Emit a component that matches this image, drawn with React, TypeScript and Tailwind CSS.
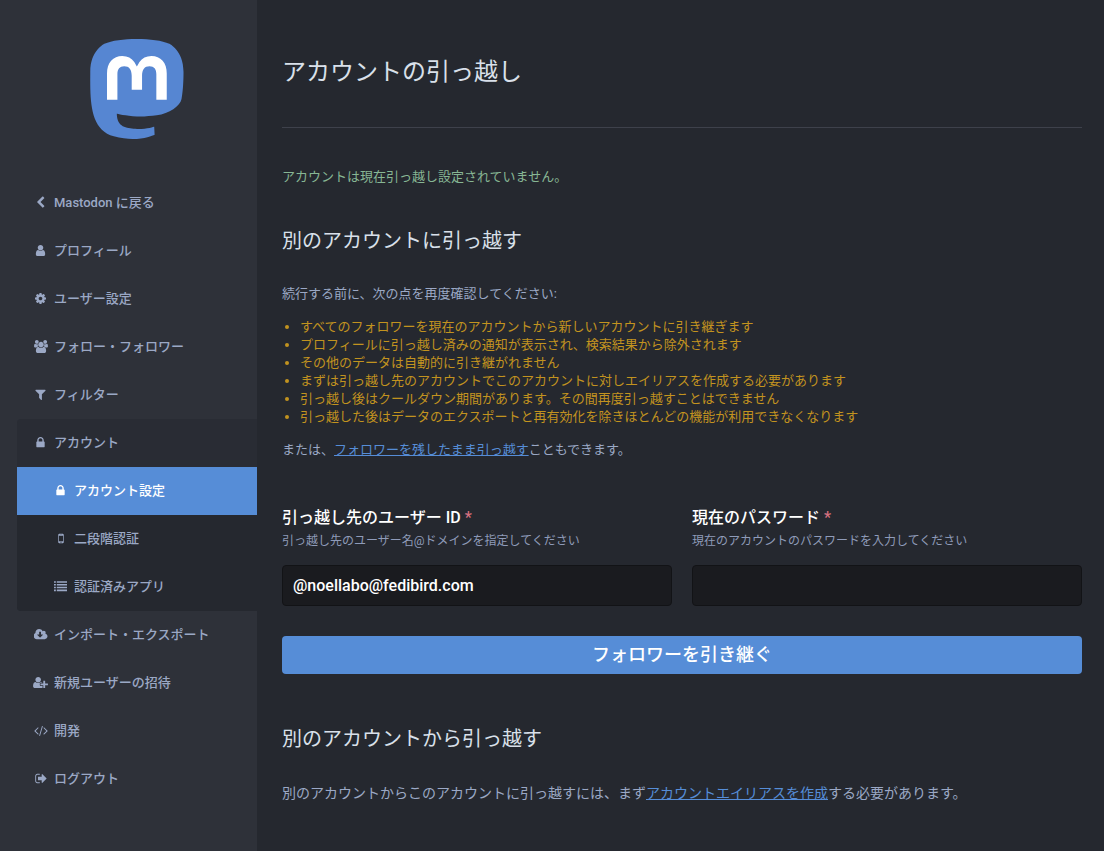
import { useState } from "react";
import type { ReactNode } from "react";

type IconName =
  | "back"
  | "user"
  | "cog"
  | "users"
  | "filter"
  | "lock"
  | "mobile"
  | "list"
  | "cloud"
  | "userPlus"
  | "code"
  | "signOut";

const icons: Record<IconName, { box: string; size: string; d: string }> = {
  back: {
    box: "256 0 1280 1792",
    size: "w-[9px]",
    d: "M1427 301l-531 531 531 531q19 19 19 45t-19 45l-166 166q-19 19-45 19t-45-19l-742-742q-19-19-19-45t19-45l742-742q19-19 45-19t45 19l166 166q19 19 19 45t-19 45z",
  },
  user: {
    box: "192 0 1408 1792",
    size: "w-[11px]",
    d: "M1536 1399q0 109-62.5 187t-150.5 78h-854q-88 0-150.5-78t-62.5-187q0-85 8.5-160.5t31.5-152 58.5-131 94-89 134.5-34.5q131 128 313 128t313-128q76 0 134.5 34.5t94 89 58.5 131 31.5 152 8.5 160.5zm-256-887q0 159-112.5 271.5t-271.5 112.5-271.5-112.5-112.5-271.5 112.5-271.5 271.5-112.5 271.5 112.5 112.5 271.5z",
  },
  cog: {
    box: "128 0 1536 1792",
    size: "w-[11px]",
    d: "M1152 896q0-106-75-181t-181-75-181 75-75 181 75 181 181 75 181-75 75-181zm512-109v222q0 12-8 23t-20 13l-185 28q-19 54-39 91 35 50 107 138 10 12 10 25t-9 23q-27 37-99 108t-94 71q-12 0-26-9l-138-108q-44 23-91 38-16 136-29 186-7 28-36 28h-222q-14 0-24.5-8.5t-11.5-21.5l-28-184q-49-16-90-37l-141 107q-10 9-25 9-14 0-25-11-126-114-165-168-7-10-7-23 0-12 8-23 15-21 51-66.5t54-70.5q-27-50-41-99l-183-27q-13-2-21-12.5t-8-23.5v-222q0-12 8-23t19-13l186-28q14-46 39-92-40-57-107-138-10-12-10-24 0-10 9-23 26-36 98.5-107.5t94.5-71.5q13 0 26 10l138 107q44-23 91-38 16-136 29-186 7-28 36-28h222q14 0 24.5 8.5t11.5 21.5l28 184q49 16 90 37l142-107q9-9 24-9 13 0 25 10 129 119 165 170 7 8 7 22 0 12-8 23-15 21-51 66.5t-54 70.5q26 50 41 98l183 28q13 2 21 12.5t8 23.5z",
  },
  users: {
    box: "0 0 1920 1792",
    size: "w-[14px]",
    d: "M593 896q-162 5-265 128h-134q-82 0-138-40.5t-56-118.5q0-353 124-353 6 0 43.5 21t97.5 42.5 119 21.5q67 0 133-23-5 37-5 66 0 139 81 256zm1071 637q0 120-73 189.5t-194 69.5h-874q-121 0-194-69.5t-73-189.5q0-53 3.5-103.5t14-109 26.5-108.5 43-97.5 62-81 85.5-53.5 111.5-20q10 0 43 21.5t73 48 107 48 135 21.5 135-21.5 107-48 73-48 43-21.5q61 0 111.5 20t85.5 53.5 62 81 43 97.5 26.5 108.5 14 109 3.5 103.5zm-1024-1277q0 106-75 181t-181 75-181-75-75-181 75-181 181-75 181 75 75 181zm704 384q0 159-112.5 271.5t-271.5 112.5-271.5-112.5-112.5-271.5 112.5-271.5 271.5-112.5 271.5 112.5 112.5 271.5zm576 225q0 78-56 118.5t-138 40.5h-134q-103-123-265-128 81-117 81-256 0-29-5-66 66 23 133 23 59 0 119-21.5t97.5-42.5 43.5-21q124 0 124 353zm-128-609q0 106-75 181t-181 75-181-75-75-181 75-181 181-75 181 75 75 181z",
  },
  filter: {
    box: "192 0 1408 1792",
    size: "w-[11px]",
    d: "M1595 295q17 41-14 70l-493 493v742q0 42-39 59-13 5-25 5-27 0-45-19l-256-256q-19-19-19-45v-486l-493-493q-31-29-14-70 17-39 59-39h1280q42 0 59 39z",
  },
  lock: {
    box: "320 0 1152 1792",
    size: "w-[9px]",
    d: "M640 768h512v-192q0-106-75-181t-181-75-181 75-75 181v192zm832 96v576q0 40-28 68t-68 28h-960q-40 0-68-28t-28-68v-576q0-40 28-68t68-28h32v-192q0-184 132-316t316-132 316 132 132 316v192h32q40 0 68 28t28 68z",
  },
  mobile: {
    box: "512 0 768 1792",
    size: "w-[6px]",
    d: "M976 1408q0-33-23.500-56.500t-56.500-23.500-56.500 23.500-23.500 56.500 23.500 56.500 56.500 23.500 56.500-23.500 23.500-56.500zm208-160v-704q0-13-9.500-22.500t-22.500-9.500h-512q-13 0-22.500 9.500t-9.500 22.500v704q0 13 9.500 22.500t22.500 9.500h512q13 0 22.500-9.500t9.500-22.500zm-192-848q0-16-16-16h-160q-16 0-16 16t16 16h160q16 0 16-16zm288-16v1024q0 52-38 90t-90 38h-512q-52 0-90-38t-38-90v-1024q0-52 38-90t90-38h512q52 0 90 38t38 90z",
  },
  list: {
    box: "0 0 1792 1792",
    size: "w-[13px]",
    d: "M0 160h256v224h-256zM384 160h1408v224h-1408zM0 544h256v224h-256zM384 544h1408v224h-1408zM0 928h256v224h-256zM384 928h1408v224h-1408zM0 1312h256v224h-256zM384 1312h1408v224h-1408z",
  },
  cloud: {
    box: "0 0 1920 1792",
    size: "w-[14px]",
    d: "M1216 928q0-14-9-23t-23-9h-224v-352q0-13-9.500-22.500t-22.500-9.500h-192q-13 0-22.500 9.500t-9.500 22.500v352h-224q-13 0-22.500 9.500t-9.500 22.500q0 14 9 23l352 352q9 9 23 9t23-9l351-351q10-12 10-24zm640 224q0 159-112.500 271.500t-271.500 112.500h-1088q-185 0-316.500-131.500t-131.500-316.500q0-130 70-240t188-165q-2-30-2-43 0-212 150-362t362-150q156 0 285.500 87t188.500 231q71-62 166-62 106 0 181 75t75 181q0 76-41 138 130 31 213.500 135.500t83.500 238.500z",
  },
  userPlus: {
    box: "0 0 2048 1792",
    size: "w-[15px]",
    d: "M704 896q-159 0-271.500-112.500t-112.500-271.500 112.500-271.500 271.500-112.500 271.500 112.500 112.500 271.500-112.500 271.500-271.500 112.500zm960 128h352q13 0 22.500 9.500t9.500 22.500v192q0 13-9.500 22.500t-22.500 9.500h-352v352q0 13-9.500 22.500t-22.500 9.500h-192q-13 0-22.500-9.500t-9.500-22.500v-352h-352q-13 0-22.500-9.500t-9.500-22.500v-192q0-13 9.500-22.500t22.500-9.500h352v-352q0-13 9.500-22.500t22.500-9.500h192q13 0 22.500 9.500t9.500 22.500v352zm-736 224q0 52 38 90t90 38h256v238q-68 50-171 50h-874q-121 0-194-69t-73-190q0-53 3.500-103.500t14-109 26.500-108.500 43-97.500 62-81 85.500-53.500 111.500-20q19 0 39 17 79 61 154.500 91.500t164.500 30.500 164.500-30.500 154.500-91.500q20-17 39-17 132 0 217 96h-223q-52 0-90 38t-38 90v192z",
  },
  code: {
    box: "64 0 1920 1792",
    size: "w-[14px]",
    d: "M681 1399l-50 50q-10 10-23 10t-23-10l-466-466q-10-10-10-23t10-23l466-466q10-10 23-10t23 10l50 50q10 10 10 23t-10 23l-393 393 393 393q10 10 10 23t-10 23zm591-1067l-373 1291q-4 13-15.500 19.500t-23.500 2.500l-62-17q-13-4-19.500-15.500t-2.500-24.500l373-1291q4-13 15.500-19.500t23.500-2.500l62 17q13 4 19.500 15.500t2.500 24.500zm657 651l-466 466q-10 10-23 10t-23-10l-50-50q-10-10-10-23t10-23l393-393-393-393q-10-10-10-23t10-23l50-50q10-10 23-10t23 10l466 466q10 10 10 23t-10 23z",
  },
  signOut: {
    box: "64 0 1600 1792",
    size: "w-[12px]",
    d: "M704 1440q0 4 1 20t.5 26.500-3 23.500-10 19.500-20.500 6.500h-320q-119 0-203.500-84.500t-84.500-203.500v-704q0-119 84.500-203.500t203.500-84.500h320q13 0 22.500 9.500t9.500 22.500q0 4 1 20t.5 26.500-3 23.500-10 19.500-20.500 6.500h-320q-66 0-113 47t-47 113v704q0 66 47 113t113 47h312l11.500 1 11.500 3 8 5.500 7 9 2 13.500zm928-544q0 26-19 45l-544 544q-19 19-45 19t-45-19-19-45v-288h-448q-26 0-45-19t-19-45v-384q0-26 19-45t45-19h448v-288q0-26 19-45t45-19 45 19l544 544q19 19 19 45z",
  },
};

function Icon({ name }: { name: IconName }) {
  const icon = icons[name];
  return (
    <span className="flex w-[17px] shrink-0 justify-center">
      <svg viewBox={icon.box} className={`h-[13px] ${icon.size}`} fill="currentColor" aria-hidden="true">
        <path d={icon.d} />
      </svg>
    </span>
  );
}

function Logo() {
  return (
    <svg viewBox="0 0 217 232" className="h-[100px] w-[94px]" role="img" aria-label="Mastodon">
      <path
        fill="#5686d2"
        d="M211.807 139.088c-3.181 16.366-28.492 34.277-57.562 37.748-15.159 1.809-30.084 3.472-45.999 2.742-26.028-1.193-46.565-6.213-46.565-6.213 0 2.534.156 4.946.469 7.203 3.384 25.686 25.470 27.225 46.391 27.942 21.116.723 39.919-5.206 39.919-5.206l.867 19.090s-14.770 7.931-41.081 9.390c-14.509.798-32.524-.365-53.506-5.919C9.232 213.820 1.406 165.311.209 116.091c-.365-14.614-.140-28.394-.140-39.919 0-50.330 32.976-65.082 32.976-65.082C49.672 3.454 78.204.243 107.865 0h.729c29.661.243 58.211 3.454 74.837 11.090 0 0 32.975 14.752 32.975 65.082 0 0 .414 37.134-4.599 62.916"
      />
      <path
        fill="#fff"
        d="M177.510 80.077v60.941h-24.144v-59.150c0-12.469-5.246-18.797-15.740-18.797-11.602 0-17.417 7.507-17.417 22.352v32.376H96.207V85.423c0-14.845-5.816-22.352-17.419-22.352-10.493 0-15.740 6.328-15.740 18.797v59.150H38.905V80.077c0-12.455 3.171-22.353 9.541-29.675 6.569-7.323 15.171-11.076 25.850-11.076 12.355 0 21.711 4.748 27.898 14.247l6.013 10.081 6.015-10.081c6.185-9.499 15.541-14.247 27.898-14.247 10.678 0 19.280 3.753 25.850 11.076 6.368 7.322 9.540 17.220 9.540 29.675"
      />
    </svg>
  );
}

function NavItem({ icon, sub, active, children }: { icon: IconName; sub?: boolean; active?: boolean; children: ReactNode }) {
  return (
    <li>
      <a
        href="#"
        aria-current={active ? "page" : undefined}
        className={`flex h-12 items-center gap-[5px] pr-[15px] pb-px text-[13px] font-medium ${sub ? "pl-[35px]" : "pl-[15px]"} ${
          active ? "bg-[#568dd7] text-white" : "text-[#9ba8c5]"
        }`}
      >
        <Icon name={icon} />
        {children}
      </a>
    </li>
  );
}

function Field({
  id,
  label,
  hint,
  type,
  value,
  onChange,
}: {
  id: string;
  label: string;
  hint: string;
  type: string;
  value: string;
  onChange: (value: string) => void;
}) {
  return (
    <div className="min-w-0 flex-1">
      <label htmlFor={id} className="block text-[16px] leading-[20px] font-medium text-white">
        {label} <span className="text-[#d5707f]">*</span>
      </label>
      <p id={`${id}-hint`} className="mt-1 text-[12px] leading-[18px] text-[#8f9bb9]">
        {hint}
      </p>
      <input
        id={id}
        type={type}
        value={value}
        aria-describedby={`${id}-hint`}
        onChange={(event) => onChange(event.target.value)}
        className="mt-[15px] block h-[41px] w-full rounded-[4px] border border-[#121316] bg-[#1a1b1f] px-[10px] text-[16px] font-medium text-white outline-none"
      />
    </div>
  );
}

const notes = [
  "すべてのフォロワーを現在のアカウントから新しいアカウントに引き継ぎます",
  "プロフィールに引っ越し済みの通知が表示され、検索結果から除外されます",
  "その他のデータは自動的に引き継がれません",
  "まずは引っ越し先のアカウントでこのアカウントに対しエイリアスを作成する必要があります",
  "引っ越し後はクールダウン期間があります。その間再度引っ越すことはできません",
  "引っ越した後はデータのエクスポートと再有効化を除きほとんどの機能が利用できなくなります",
];

export default function App() {
  const [handle, setHandle] = useState("@noellabo@fedibird.com");
  const [password, setPassword] = useState("");

  return (
    <div
      lang="ja"
      className="flex min-h-screen bg-[#25282f] font-[Roboto,'Noto_Sans_CJK_JP',sans-serif] text-[13px] leading-[18px] text-[#9ba8c5]"
    >
      <aside className="w-[257px] shrink-0 bg-[#2e3139] pl-[17px]">
        <a href="#" className="flex justify-center pt-[39px] pb-10">
          <Logo />
        </a>
        <nav>
          <ul>
            <NavItem icon="back">Mastodon に戻る</NavItem>
            <NavItem icon="user">プロフィール</NavItem>
            <NavItem icon="cog">ユーザー設定</NavItem>
            <NavItem icon="users">フォロー・フォロワー</NavItem>
            <NavItem icon="filter">フィルター</NavItem>
            <li className="overflow-hidden rounded-l-[4px] bg-[#292c34]">
              <ul>
                <NavItem icon="lock">アカウント</NavItem>
              </ul>
              <ul className="bg-[#25282f]">
                <NavItem icon="lock" sub active>
                  アカウント設定
                </NavItem>
                <NavItem icon="mobile" sub>
                  二段階認証
                </NavItem>
                <NavItem icon="list" sub>
                  認証済みアプリ
                </NavItem>
              </ul>
            </li>
            <NavItem icon="cloud">インポート・エクスポート</NavItem>
            <NavItem icon="userPlus">新規ユーザーの招待</NavItem>
            <NavItem icon="code">開発</NavItem>
            <NavItem icon="signOut">ログアウト</NavItem>
          </ul>
        </nav>
      </aside>

      <main className="min-w-0 flex-1 pt-14 pr-[22px] pb-10 pl-[25px]">
        <h1 className="border-b border-[#3e414b] pb-[39px] text-[24px] leading-[32px] text-[#d9e0ea]">アカウントの引っ越し</h1>

        <p className="mt-10 text-[#87b694]">アカウントは現在引っ越し設定されていません。</p>

        <h2 className="mt-[43px] text-[20px] leading-[24px] text-[#d9e0ea]">別のアカウントに引っ越す</h2>

        <p className="mt-8">続行する前に、次の点を再度確認してください:</p>
        <ul className="mt-[15px] list-disc pl-[18px] text-[#c2931f]">
          {notes.map((note) => (
            <li key={note}>{note}</li>
          ))}
        </ul>
        <p className="mt-[15px]">
          または、
          <a href="#" className="text-[#568dd7] underline">
            フォロワーを残したまま引っ越す
          </a>
          こともできます。
        </p>

        <form className="mt-[49px]" onSubmit={(event) => event.preventDefault()}>
          <div className="flex gap-5">
            <Field
              id="acct"
              label="引っ越し先のユーザー ID"
              hint="引っ越し先のユーザー名@ドメインを指定してください"
              type="text"
              value={handle}
              onChange={setHandle}
            />
            <Field
              id="current-password"
              label="現在のパスワード"
              hint="現在のアカウントのパスワードを入力してください"
              type="password"
              value={password}
              onChange={setPassword}
            />
          </div>
          <button type="submit" className="mt-[30px] block h-[38px] w-full rounded-[4px] bg-[#568dd7] text-[18px] font-medium text-white">
            フォロワーを引き継ぐ
          </button>
        </form>

        <h2 className="mt-[53px] text-[20px] leading-[24px] text-[#d9e0ea]">別のアカウントから引っ越す</h2>
        <p className="mt-8 text-[14px] leading-[20px]">
          別のアカウントからこのアカウントに引っ越すには、まず
          <a href="#" className="text-[#568dd7] underline">
            アカウントエイリアスを作成
          </a>
          する必要があります。
        </p>
      </main>
    </div>
  );
}
